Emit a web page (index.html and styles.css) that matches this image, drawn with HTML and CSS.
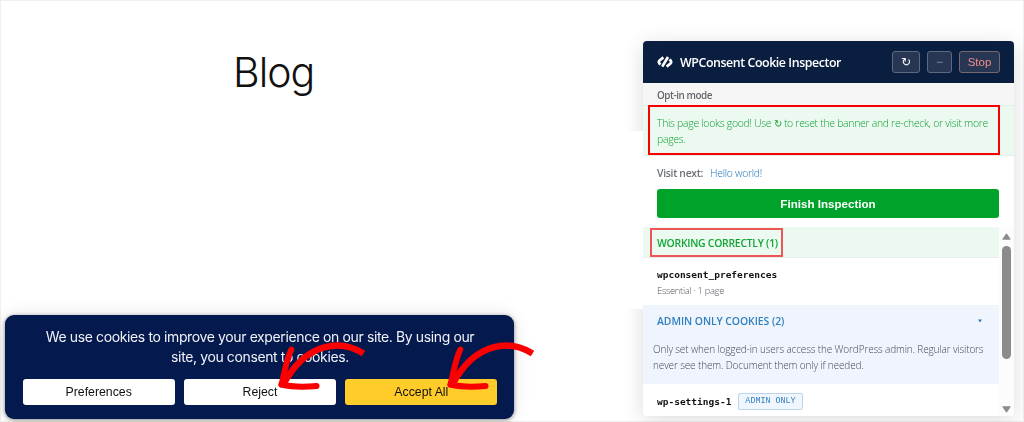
FILE: index.html
```html
<!DOCTYPE html>
<html lang="en">
<head>
  <meta charset="UTF-8">
  <meta name="viewport" content="width=device-width, initial-scale=1.0">
  <title>Blog</title>
  <link rel="stylesheet" href="styles.css">
</head>
<body>
  <main class="page">
    <h1 class="page-title">Blog</h1>
    <div class="page-content"></div>
  </main>

  <section class="cookie-banner">
    <p class="banner-text">We use cookies to improve your experience on our site. By using our<br>site, you consent to cookies.</p>
    <div class="banner-buttons">
      <button type="button">Preferences</button>
      <button type="button">Reject</button>
      <button type="button" class="accept">Accept All</button>
    </div>
  </section>

  <aside class="inspector">
    <header class="inspector-header">
      <svg class="logo" viewBox="0 0 16 12" width="16" height="12">
        <path d="M6.4 1.4L2.6 4.4Q1.2 5.8 2.4 7.4L3.4 8.6M11 1L5.2 10.6M9.6 10.6L13.4 7.6Q14.8 6.2 13.6 4.6L12.6 3.4"/>
      </svg>
      <h2>WPConsent Cookie Inspector</h2>
      <button type="button" class="tool reload">↻</button>
      <button type="button" class="tool minimize">−</button>
      <button type="button" class="tool stop">Stop</button>
    </header>
    <div class="mode">Opt-in mode</div>
    <div class="status">This page looks good! Use <span class="glyph">↻</span> to reset the banner and re-check, or visit more<br>pages.</div>
    <div class="next">
      <div class="visit"><b>Visit next:</b><a>Hello world!</a></div>
      <button type="button" class="finish">Finish Inspection</button>
    </div>
    <div class="results">
      <div class="list">
        <h3 class="group working">WORKING CORRECTLY (1)</h3>
        <div class="cookie">
          <code>wpconsent_preferences</code>
          <small>Essential · 1 page</small>
        </div>
        <div class="admin">
          <h3 class="group">ADMIN ONLY COOKIES (2)
            <svg viewBox="0 0 4 4" width="4" height="4"><path d="M0 0.4H4L2 3.6Z" fill="#2e7fc0"/></svg>
          </h3>
          <p>Only set when logged-in users access the WordPress admin. Regular visitors<br>never see them. Document them only if needed.</p>
        </div>
        <div class="cookie">
          <div class="cookie-name"><code>wp-settings-1</code><span class="tag">ADMIN ONLY</span></div>
        </div>
      </div>
      <div class="scrollbar">
        <svg viewBox="0 0 9 7" width="9" height="7"><path d="M4.5 0.8L8.2 6.2H0.8Z" fill="#8b8b8b" stroke="#8b8b8b" stroke-linejoin="round"/></svg>
        <div class="thumb"></div>
        <svg class="down" viewBox="0 0 9 7" width="9" height="7"><path d="M4.5 6.2L8.2 0.8H0.8Z" fill="#8b8b8b" stroke="#8b8b8b" stroke-linejoin="round"/></svg>
      </div>
    </div>
  </aside>

  <!-- highlights and arrows -->
  <div class="mark mark-status"></div>
  <div class="mark mark-working"></div>
  <svg class="arrow arrow-reject" viewBox="0 0 94 52" width="94" height="52">
    <path class="curve" d="M87.5 9.5C66 -4 31 -4 7 41"/>
    <path class="barb" d="M15.3 5.5C9.5 18 8.5 30 5.5 40.5"/>
    <path class="barb" d="M5.5 40.5C18 43.5 29 43 40.5 42"/>
  </svg>
  <svg class="arrow arrow-accept" viewBox="0 0 94 52" width="94" height="52">
    <path class="curve" d="M87.5 9.5C66 -4 31 -4 7 41"/>
    <path class="barb" d="M15.3 5.5C9.5 18 8.5 30 5.5 40.5"/>
    <path class="barb" d="M5.5 40.5C18 43.5 29 43 40.5 42"/>
  </svg>
</body>
</html>
```

FILE: styles.css
```css
* {
  box-sizing: border-box;
}
body {
  margin: 0;
  height: 422px;
  overflow: hidden;
  background: #fff;
  font-family: "Open Sans", sans-serif;
}
h1, h2, h3, p {
  margin: 0;
}
button {
  padding: 0;
  border: none;
  font-family: "Liberation Sans", Arial, sans-serif;
}
.page {
  height: 422px;
  border: 1px solid #f0f0f0;
}
.page-title {
  height: 130px;
  padding: 45px 0 0 232px;
  font: 300 41px/52px Inter, sans-serif;
  letter-spacing: -1px;
  color: #111;
}
.page-content {
  position: relative;
  z-index: 2;
  width: 642px;
  height: 178px;
  background: #fff;
}

/* cookie banner */
.cookie-banner {
  position: fixed;
  left: 5px;
  bottom: 3px;
  z-index: 3;
  width: 509px;
  height: 104px;
  padding: 12px 16.5px 0 17.5px;
  border-radius: 9px;
  background: #04194e;
  box-shadow: 0 1px 4px rgba(0, 0, 0, 0.45), 0 0 18px rgba(0, 0, 0, 0.1);
}
.banner-text {
  color: #f0f2f6;
  font: 14px/20px Inter, sans-serif;
  letter-spacing: -0.38px;
  text-align: center;
  white-space: nowrap;
}
.banner-buttons {
  display: grid;
  grid-template-columns: repeat(3, 1fr);
  gap: 9px;
  margin-top: 12px;
}
.banner-buttons button {
  height: 26px;
  border-radius: 3px;
  background: #fff;
  color: #111;
  font-size: 12.3px;
}
.banner-buttons .accept {
  background: #ffcc29;
}

/* inspector panel */
.inspector {
  position: fixed;
  top: 41px;
  left: 643px;
  z-index: 1;
  display: flex;
  flex-direction: column;
  width: 371px;
  height: 375px;
  border-radius: 4px;
  overflow: hidden;
  background: #fff;
  box-shadow: 0 4px 22px rgba(0, 0, 0, 0.14);
}
.inspector-header {
  display: flex;
  align-items: center;
  height: 42px;
  padding: 0 14px;
  background: #0a1f3f;
  flex-shrink: 0;
}
.logo {
  fill: none;
  stroke: #fff;
  stroke-width: 2.7;
}
.inspector-header h2 {
  flex: 1;
  margin-left: 7px;
  color: #fff;
  font-size: 12.4px;
  font-weight: 600;
  letter-spacing: -0.43px;
  white-space: nowrap;
}
.tool {
  height: 22px;
  margin-left: 7px;
  border: 1px solid #5c6980;
  border-radius: 3px;
  background: #263653;
  color: #fff;
  font-size: 12px;
}
.reload {
  width: 28px;
  font-family: "DejaVu Sans", sans-serif;
}
.minimize {
  width: 25px;
  color: #8391ad;
}
.stop {
  width: 41px;
  border-color: #75696f;
  color: #f58c8c;
  font-size: 11.5px;
}
.mode {
  height: 22px;
  padding-left: 14px;
  background: #f6f6f7;
  color: #63666b;
  font-size: 9.9px;
  font-weight: 600;
  letter-spacing: -0.45px;
  line-height: 24px;
  flex-shrink: 0;
}
.status {
  height: 51px;
  padding: 9px 14px 0;
  border: solid #e5efe8;
  border-width: 1px 0;
  background: #ecf9f0;
  color: #12a036;
  font-size: 10.4px;
  font-weight: 300;
  letter-spacing: -0.27px;
  line-height: 16px;
  white-space: nowrap;
  flex-shrink: 0;
}
.glyph {
  font-family: "DejaVu Sans", sans-serif;
  font-size: 10px;
  line-height: 1;
}
.next {
  height: 71px;
  padding: 9px 15px 0 14px;
  flex-shrink: 0;
}
.visit {
  display: flex;
  gap: 7px;
  color: #6c7076;
  font-size: 10.4px;
  letter-spacing: -0.3px;
  line-height: 16px;
}
.visit b {
  font-weight: 600;
}
.visit a {
  color: #1f74ba;
  font-weight: 300;
}
.finish {
  display: block;
  width: 100%;
  height: 29px;
  margin-top: 8px;
  border-radius: 3px;
  background: #00a32a;
  color: #fff;
  font-size: 11.6px;
  font-weight: bold;
}
.results {
  display: flex;
  flex: 1;
  min-height: 0;
}
.list {
  flex: 1;
  overflow: hidden;
}
.group {
  padding: 0 14px;
  font-size: 10.4px;
  font-weight: 600;
  letter-spacing: -0.05px;
  line-height: 32px;
}
.working {
  height: 31px;
  border-bottom: 1px solid #e9eef0;
  background: #ecf9f0;
  color: #10a535;
  letter-spacing: -0.25px;
}
.cookie {
  height: 47px;
  padding: 9px 14px 0;
}
.cookie code {
  display: block;
  color: #111;
  font: bold 9.5px/16px "DejaVu Sans Mono", monospace;
}
.cookie small {
  display: block;
  color: #55595f;
  font-size: 9.4px;
  font-weight: 300;
  letter-spacing: -0.3px;
  line-height: 16px;
}
.admin {
  height: 79px;
  background: #f0f5fd;
}
.admin .group {
  display: flex;
  align-items: center;
  justify-content: space-between;
  padding-right: 17px;
  color: #2e7fc0;
}
.admin p {
  padding: 4px 10px 0;
  color: #444a55;
  font-size: 10px;
  font-weight: 300;
  letter-spacing: -0.13px;
  line-height: 16px;
  white-space: nowrap;
}
.cookie-name {
  display: flex;
  align-items: center;
  gap: 7px;
}
.tag {
  height: 17px;
  padding: 0 6px;
  border: 1px solid #bcd5ec;
  border-radius: 2px;
  background: #f0f6fd;
  color: #2e7fc0;
  font: 8.4px/15px "Liberation Mono", monospace;
}
.scrollbar {
  display: flex;
  flex-direction: column;
  align-items: center;
  width: 15px;
  padding: 6px 0 3px;
  background: #fcfcfc;
}
.thumb {
  width: 9px;
  height: 113px;
  margin-top: 6px;
  border-radius: 5px;
  background: #8b8b8b;
}
.down {
  margin-top: auto;
}

/* highlights */
.mark {
  position: absolute;
  z-index: 4;
}
.mark-status {
  left: 648px;
  top: 105px;
  width: 352px;
  height: 50px;
  border: 2px solid #f90000;
}
.mark-working {
  left: 650px;
  top: 228px;
  width: 133px;
  height: 29px;
  border: 2px solid #ef5555;
}
.arrow {
  position: absolute;
  top: 344px;
  z-index: 4;
  overflow: visible;
  fill: none;
  stroke: #fb0000;
}
.arrow-reject {
  left: 276px;
}
.arrow-accept {
  left: 444.5px;
}
.curve {
  stroke-width: 6.5;
}
.barb {
  stroke-width: 6;
  stroke-linecap: round;
}
```
